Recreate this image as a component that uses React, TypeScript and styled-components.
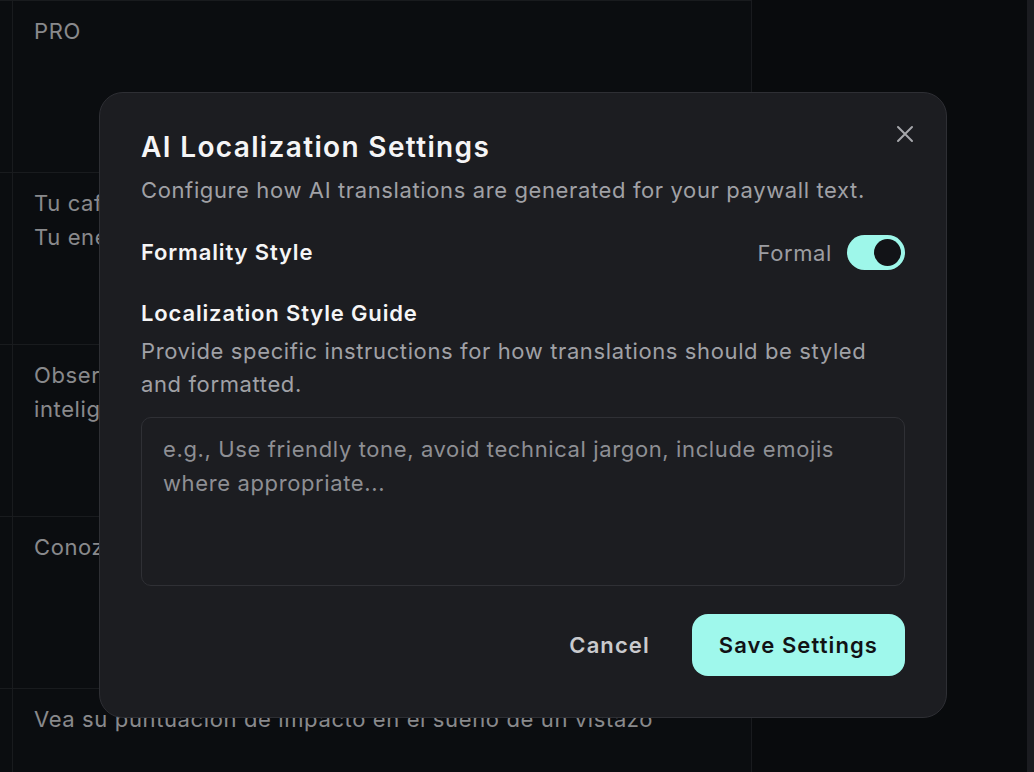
import React, { useState } from 'react';
import styled, { createGlobalStyle } from 'styled-components';

const GlobalStyle = createGlobalStyle`
  * {
    margin: 0;
    padding: 0;
    box-sizing: border-box;
  }
  body {
    font-family: Inter, "Noto Sans", Arial, sans-serif;
    letter-spacing: 0.62px;
    background: #0e1014;
    overflow: hidden;
  }
`;

const Page = styled.div`
  display: flex;
  height: 100vh;
`;

const Table = styled.div`
  width: 752px;
  border-right: 1px solid #25272c;
  border-top: 1px solid #25272c;
  background: #111317;
`;

const Row = styled.div`
  display: grid;
  grid-template-columns: 12px 1fr;
  height: 172px;
  border-bottom: 1px solid #25272c;
`;

const Cell = styled.div`
  grid-column: 2;
  border-left: 1px solid #25272c;
  padding: 13px 21px;
  font-size: 22px;
  line-height: 34px;
  color: #c4c5c9;
`;

const Side = styled.div`
  flex: 1;
  background: #0e1014;
`;

const Scrollbar = styled.div`
  width: 7px;
  background: #28292e;
`;

const Overlay = styled.div`
  position: fixed;
  inset: 0;
  background: rgba(0, 0, 0, 0.3);
  display: flex;
  align-items: center;
  justify-content: center;
  padding: 38px 0 0 12px;
`;

const Modal = styled.div`
  position: relative;
  width: 848px;
  background: #1c1d21;
  border: 1px solid #2e2f34;
  border-radius: 24px;
  padding: 37px 41px 41px;
`;

const Close = styled.button`
  position: absolute;
  top: 31px;
  right: 31px;
  width: 20px;
  height: 20px;
  background: none;
  border: none;
  color: #a6a7ab;
  display: flex;
  align-items: center;
  justify-content: center;
  cursor: pointer;
`;

const Title = styled.h2`
  font-size: 28px;
  line-height: 34px;
  font-weight: 600;
  letter-spacing: 1.35px;
  color: #f5f5f6;
`;

const Muted = styled.p<{ $gap?: number }>`
  margin-top: ${p => p.$gap ?? 0}px;
  font-size: 22px;
  line-height: 33px;
  color: #a0a1a6;
`;

const Label = styled.div`
  font-size: 22px;
  line-height: 33px;
  font-weight: 600;
  letter-spacing: 0.85px;
  color: #f5f5f6;
`;

const SettingRow = styled.div`
  display: flex;
  align-items: center;
  justify-content: space-between;
  margin-top: 28px;
`;

const ToggleWrap = styled.div`
  display: flex;
  align-items: center;
  gap: 15px;
  font-size: 22px;
  color: #9c9da2;
`;

const Switch = styled.button<{ $on: boolean }>`
  width: 58px;
  height: 35px;
  border-radius: 18px;
  border: none;
  background: ${p => (p.$on ? '#9ef7ea' : '#3a3b40')};
  padding: 4px;
  display: flex;
  justify-content: ${p => (p.$on ? 'flex-end' : 'flex-start')};
  cursor: pointer;
`;

const Knob = styled.span`
  width: 27px;
  height: 27px;
  border-radius: 50%;
  background: #121317;
`;

const Section = styled.div`
  margin-top: 27px;
`;

const TextArea = styled.textarea`
  display: block;
  width: 100%;
  height: 169px;
  margin-top: 16px;
  padding: 14px 21px;
  background: #1c1d21;
  border: 1px solid #2f3035;
  border-radius: 10px;
  font-family: inherit;
  letter-spacing: inherit;
  font-size: 22px;
  line-height: 34px;
  color: #e5e5e7;
  resize: none;
  outline: none;
  &::placeholder {
    color: #8e8f94;
  }
`;

const Footer = styled.div`
  display: flex;
  justify-content: flex-end;
  align-items: center;
  gap: 20px;
  margin-top: 28px;
`;

const Button = styled.button<{ $primary?: boolean }>`
  height: 62px;
  padding: 0 ${p => (p.$primary ? 27 : 22)}px;
  border: none;
  border-radius: 16px;
  font-family: inherit;
  letter-spacing: 1.1px;
  font-size: 22px;
  font-weight: 600;
  background: ${p => (p.$primary ? '#9ff8ec' : 'transparent')};
  color: ${p => (p.$primary ? '#111215' : '#c9cacd')};
  cursor: pointer;
`;

const rows = [
  ['PRO'],
  ['Tu café de la tarde podría estar afectando tu descanso', 'Tu energía depende de cómo duermes cada noche'],
  ['Observa tus ciclos de sueño con un seguimiento', 'inteligente y recomendaciones personalizadas'],
  ['Conozca los hábitos que mejoran su descanso'],
  ['Vea su puntuación de impacto en el sueño de un vistazo'],
];

function App() {
  const [formal, setFormal] = useState(true);
  const [guide, setGuide] = useState('');

  return (
    <>
      <GlobalStyle />
      <Page>
        <Table>
          {rows.map((lines, i) => (
            <Row key={i}>
              <Cell>
                {lines.map(l => (
                  <div key={l}>{l}</div>
                ))}
              </Cell>
            </Row>
          ))}
        </Table>
        <Side />
        <Scrollbar />
      </Page>

      <Overlay>
        <Modal>
          <Close aria-label="Close">
            <svg width="18" height="18" viewBox="0 0 18 18" fill="none" stroke="currentColor" strokeWidth="2" strokeLinecap="round">
              <path d="M2 2l14 14M16 2L2 16" />
            </svg>
          </Close>
          <Title>AI Localization Settings</Title>
          <Muted $gap={10}>Configure how AI translations are generated for your paywall text.</Muted>

          <SettingRow>
            <Label>Formality Style</Label>
            <ToggleWrap>
              {formal ? 'Formal' : 'Informal'}
              <Switch $on={formal} onClick={() => setFormal(!formal)}>
                <Knob />
              </Switch>
            </ToggleWrap>
          </SettingRow>

          <Section>
            <Label>Localization Style Guide</Label>
            <Muted $gap={5}>
              Provide specific instructions for how translations should be styled and formatted.
            </Muted>
            <TextArea
              value={guide}
              onChange={e => setGuide(e.target.value)}
              placeholder="e.g., Use friendly tone, avoid technical jargon, include emojis where appropriate..."
            />
          </Section>

          <Footer>
            <Button>Cancel</Button>
            <Button $primary>Save Settings</Button>
          </Footer>
        </Modal>
      </Overlay>
    </>
  );
}

export default App;
